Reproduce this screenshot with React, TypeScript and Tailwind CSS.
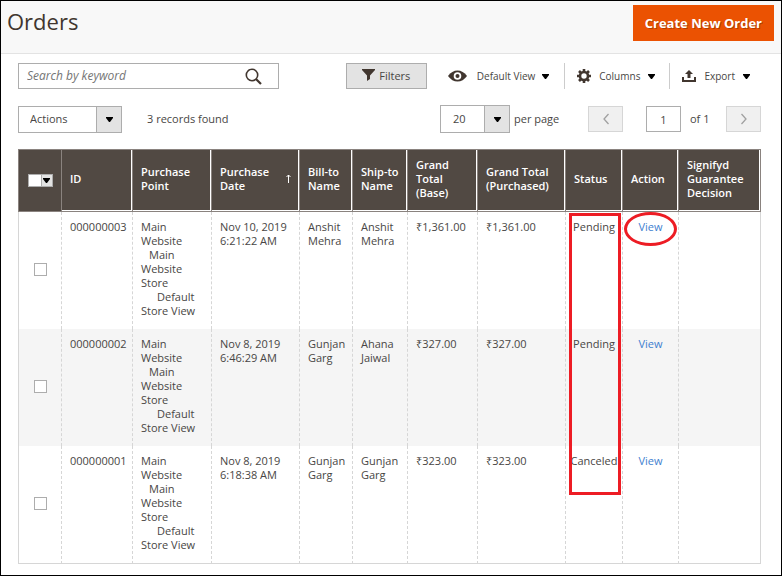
import React from "react";

const columns = [
  { label: "ID", width: "w-[71px]" },
  { label: "Purchase Point", width: "w-[79px]" },
  { label: "Purchase Date", width: "w-[88px]", sorted: true },
  { label: "Bill-to Name", width: "w-[53px]" },
  { label: "Ship-to Name", width: "w-[55px]" },
  { label: "Grand Total (Base)", width: "w-[70px]" },
  { label: "Grand Total (Purchased)", width: "w-[88px]" },
  { label: "Status", width: "w-[57px]" },
  { label: "Action", width: "w-[56px]" },
  { label: "Signifyd Guarantee Decision", width: "" },
];

const orders = [
  { id: "000000003", date: ["Nov 10, 2019", "6:21:22 AM"], bill: "Anshit Mehra", ship: "Anshit Mehra", total: "₹1,361.00", status: "Pending" },
  { id: "000000002", date: ["Nov 8, 2019", "6:46:29 AM"], bill: "Gunjan Garg", ship: "Ahana Jaiwal", total: "₹327.00", status: "Pending" },
  { id: "000000001", date: ["Nov 8, 2019", "6:18:38 AM"], bill: "Gunjan Garg", ship: "Gunjan Garg", total: "₹323.00", status: "Canceled" },
];

const th =
  "h-[63px] border-y border-l border-[#8a837f] bg-[#514943] pl-2 pr-1 pb-1 text-left align-middle font-semibold text-white";
const td = "border-l border-dashed border-[#d6d6d6] pl-2 pr-2 pt-2 pb-[11px] align-top";

function Caret() {
  return (
    <svg width="7" height="5" viewBox="0 0 7 5" aria-hidden="true" className="shrink-0">
      <path d="M0 0h7v1L4 5H3L0 1z" fill="#000" />
    </svg>
  );
}

function Chevron({ flip = false }: { flip?: boolean }) {
  return (
    <svg width="6" height="12" viewBox="0 0 6 12" aria-hidden="true" className={flip ? "rotate-180" : ""}>
      <path d="M5.5 1L1 6l4.500 5" fill="none" stroke="#a0a0a0" strokeWidth="1.300" />
    </svg>
  );
}

function Dropdown({ label, options, className, selectClassName }: { label: string; options: string[]; className: string; selectClassName: string }) {
  return (
    <div className={"relative border border-[#adadad] bg-white " + className}>
      <select aria-label={label} className={"h-full w-full appearance-none bg-transparent outline-none " + selectClassName}>
        {options.map((o) => (
          <option key={o}>{o}</option>
        ))}
      </select>
      <span className="pointer-events-none absolute inset-y-0 right-0 flex w-[25px] items-center justify-center border-l border-[#adadad] bg-[#e3e3e3]">
        <Caret />
      </span>
    </div>
  );
}

export default function App() {
  return (
    <div className="border border-black bg-white font-['Open_Sans','Noto_Sans',sans-serif] text-[11px] leading-[14px] text-[#484644]">
      <header className="flex h-[53px] items-start justify-between border-b border-[#e3e3e3] bg-[#f8f8f8] pl-[6px] pr-[7px] pt-1">
        <h1 className="text-[22px] leading-8 text-[#41362f]">Orders</h1>
        <button type="button" className="h-9 bg-[#eb5202] px-3 text-[13px] font-bold text-white [text-shadow:1px_1px_0_rgba(0,0,0,0.25)]">
          Create New Order
        </button>
      </header>

      <main className="pb-[11px] pl-[17px] pr-5 pt-[9px]">
        <div className="flex h-[26px] items-stretch">
          <div className="flex w-[261px] items-center border border-[#adadad] pl-2 pr-4">
            <input
              type="text"
              aria-label="Search by keyword"
              placeholder="Search by keyword"
              className="min-w-0 flex-1 bg-transparent text-[12px] outline-none placeholder:italic placeholder:text-[#757575]"
            />
            <button type="button" aria-label="Search">
              <svg width="17" height="17" viewBox="0 0 17 17" aria-hidden="true">
                <circle cx="7" cy="7" r="5.700" fill="none" stroke="#41362f" strokeWidth="1.600" />
                <path d="M11 11l5 5" stroke="#41362f" strokeWidth="2.200" />
              </svg>
            </button>
          </div>
          <div className="ml-auto flex items-stretch text-[10px]">
            <button type="button" className="flex w-[81px] items-center justify-center gap-1 border border-[#adadad] bg-[#e3e3e3] text-[11px]">
              <svg width="13" height="12" viewBox="0 0 13 12" aria-hidden="true" className="mb-[2px]">
                <path d="M0 0h13v1L8 6.500V10l-3 2V6.500L0 1z" fill="#41362f" />
              </svg>
              Filters
            </button>
            <button type="button" className="ml-[21px] flex items-center whitespace-nowrap pr-[15px]">
              <svg width="19" height="12" viewBox="0 0 19 12" aria-hidden="true" className="mr-[10px]">
                <path d="M0 6Q4 0.500 9.500 0.500T19 6Q15 11.500 9.500 11.500T0 6z" fill="#41362f" />
                <circle cx="9.500" cy="6" r="3.800" fill="#fff" />
                <circle cx="9.500" cy="6" r="2" fill="#41362f" />
              </svg>
              <span className="mr-[7px]">Default View</span>
              <Caret />
            </button>
            <button type="button" className="flex items-center border-l border-[#ccc] pl-3 pr-[14px]">
              <svg width="14" height="14" viewBox="0 0 14 14" aria-hidden="true" className="mr-2">
                <circle cx="7" cy="7" r="4" fill="none" stroke="#41362f" strokeWidth="2.600" />
                <g stroke="#41362f" strokeWidth="2.600">
                  <path d="M7 0v2.500M7 11.500V14M0 7h2.500M11.500 7H14M2 2l2 2M10 10l2 2M12 2l-2 2M4 10l-2 2" />
                </g>
              </svg>
              <span className="mr-2">Columns</span>
              <Caret />
            </button>
            <button type="button" className="flex items-center border-l border-[#ccc] pl-3 pr-[11px]">
              <svg width="14" height="12" viewBox="0 0 14 12" aria-hidden="true" className="mr-2">
                <path d="M0 7h2v3h10V7h2v5H0zM7 0l4 4H8.500v4h-3V4H3z" fill="#41362f" />
              </svg>
              <span className="mr-2">Export</span>
              <Caret />
            </button>
          </div>
        </div>

        <div className="mt-4 flex h-7 items-center">
          <Dropdown label="Actions" options={["Actions", "Cancel", "Hold", "Unhold"]} className="h-[27px] w-[104px]" selectClassName="pl-[11px]" />
          <span className="ml-[25px]">3 records found</span>
          <div className="ml-auto flex items-center">
            <Dropdown label="Records per page" options={["20", "30", "50", "100"]} className="h-7 w-[70px]" selectClassName="pl-3" />
            <span className="ml-1 w-[74px]">per page</span>
            <button type="button" aria-label="Previous page" className="flex h-[26px] w-[35px] items-center justify-center border border-[#d6d6d6] bg-[#f0f0f0]">
              <Chevron />
            </button>
            <input type="text" aria-label="Current page" defaultValue="1" className="ml-[23px] h-[26px] w-[35px] border border-[#adadad] bg-white text-center outline-none" />
            <span className="ml-[9px] w-9">of 1</span>
            <button type="button" aria-label="Next page" className="flex h-[26px] w-[35px] items-center justify-center border border-[#d6d6d6] bg-[#f0f0f0]">
              <Chevron flip />
            </button>
          </div>
        </div>

        <div className="relative mt-4">
          <table className="w-full table-fixed border-separate border-spacing-0">
            <colgroup>
              <col className="w-[43px]" />
              {columns.map((c) => (
                <col key={c.label} className={c.width} />
              ))}
            </colgroup>
            <thead>
              <tr>
                <th className="border-y border-l border-[#8a837f] bg-[#514943] align-middle">
                  <div className="mx-auto flex h-[13px] w-[25px] border border-[#adadad]">
                    <input type="checkbox" aria-label="Select all orders" className="h-full w-3 appearance-none bg-white" />
                    <button type="button" aria-label="Selection options" className="flex flex-1 items-center justify-center border-l border-[#adadad] bg-[#e3e3e3]">
                      <Caret />
                    </button>
                  </div>
                </th>
                {columns.map((c) => (
                  <th key={c.label} scope="col" className={th + " shadow-[inset_-1px_-1px_0_#fff] last:border-r"}>
                    {c.sorted ? (
                      <div className="flex items-center justify-between">
                        <span className="w-14">{c.label}</span>
                        <svg width="5" height="9" viewBox="0 0 5 9" aria-hidden="true" className="mr-1">
                          <path d="M2.500 9V1M0.500 3l2-2 2 2" fill="none" stroke="#fff" />
                        </svg>
                      </div>
                    ) : (
                      c.label
                    )}
                  </th>
                ))}
              </tr>
            </thead>
            <tbody className="[&>tr:last-child>td]:border-b [&>tr:last-child>td]:[border-bottom-style:solid]">
              {orders.map((o) => (
                <tr key={o.id} className="even:bg-[#f5f5f5]">
                  <td className="border-l border-[#d6d6d6] pb-[2px] text-center align-middle">
                    <input type="checkbox" aria-label={"Select order " + o.id} className="mx-auto block size-[13px] appearance-none border border-[#adadad] bg-white" />
                  </td>
                  <td className={td}>{o.id}</td>
                  <td className={td}>
                    <div>Main Website</div>
                    <div className="indent-2">Main Website Store</div>
                    <div className="indent-4">Default Store View</div>
                  </td>
                  <td className={td}>
                    {o.date[0]}
                    <br />
                    {o.date[1]}
                  </td>
                  <td className={td}>{o.bill}</td>
                  <td className={td}>{o.ship}</td>
                  <td className={td}>{o.total}</td>
                  <td className={td}>{o.total}</td>
                  <td className="border-l border-dashed border-[#d6d6d6] pt-2 text-center align-top">{o.status}</td>
                  <td className="border-l border-dashed border-[#d6d6d6] pt-2 text-center align-top">
                    <a href="#view" className="text-[#3f7fd0]">View</a>
                  </td>
                  <td className={td + " border-r [border-right-style:solid]"} />
                </tr>
              ))}
            </tbody>
          </table>
          <div className="pointer-events-none absolute right-[140px] top-16 h-[282px] w-[52px] border-3 border-[#ed1c24]" />
          <div className="pointer-events-none absolute right-[84px] top-[63px] h-[34px] w-[53px] rounded-[50%] border-3 border-[#ed1c24]" />
        </div>
      </main>
    </div>
  );
}
